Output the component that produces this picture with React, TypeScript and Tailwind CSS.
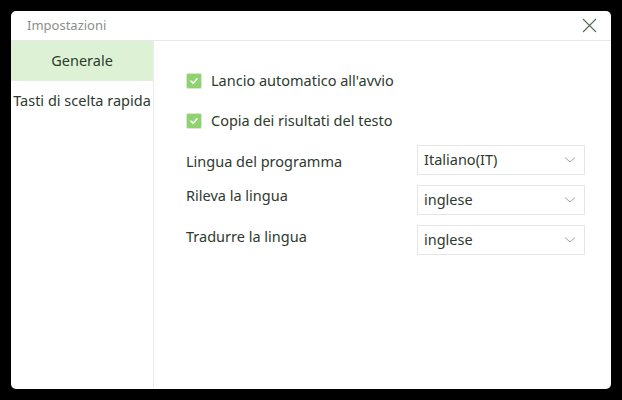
import React from 'react';

const font = { fontFamily: '"Noto Sans", "Open Sans", sans-serif' };

function Checkbox() {
  return (
    <div className="w-4 h-4 rounded-[2px] bg-[#8ed36f] border border-[#d9e9d0] flex items-center justify-center">
      <svg width="10" height="10" viewBox="0 0 10 10" fill="none">
        <path d="M2 5.2 L4.2 7.2 L8 2.8" stroke="white" strokeWidth="1.6" strokeLinecap="round" strokeLinejoin="round" />
      </svg>
    </div>
  );
}

function Select({ value }: { value: string }) {
  return (
    <div className="w-[168px] h-[30px] border border-[#e6e6e6] flex items-center justify-between pl-[6px] pr-[8px]">
      <span className="text-[14.5px] text-[#2e3a2e]">{value}</span>
      <svg width="12" height="8" viewBox="0 0 12 8" fill="none">
        <path d="M1 1.5 L6 6 L11 1.5" stroke="#9aa59a" strokeWidth="1" />
      </svg>
    </div>
  );
}

export default function App() {
  const checks = ["Lancio automatico all'avvio", 'Copia dei risultati del testo'];
  const rows = [
    { label: 'Lingua del programma', value: 'Italiano(IT)', shift: 'mt-[4px]' },
    { label: 'Rileva la lingua', value: 'inglese', shift: '-mt-[8px]' },
    { label: 'Tradurre la lingua', value: 'inglese', shift: '-mt-[6px]' },
  ];

  return (
    <div className="w-[622px] h-[400px] bg-black p-[11px]" style={font}>
      <div className="w-[600px] h-[378px] bg-white rounded-[5px] flex flex-col overflow-hidden">
        <div className="h-[30px] border-b border-[#e8e8e8] flex items-center justify-between pl-[16px] pr-[14px] shrink-0">
          <span className="text-[13px] text-[#8a8f8a]">Impostazioni</span>
          <svg width="15" height="15" viewBox="0 0 15 15" fill="none">
            <path d="M1 1 L14 14 M14 1 L1 14" stroke="#5a6a5a" strokeWidth="1.1" />
          </svg>
        </div>
        <div className="flex flex-1">
          <div className="w-[143px] border-r border-[#ececec] flex flex-col">
            <div className="h-[40px] bg-[#ddf2d5] flex items-center justify-center text-[14.5px] text-[#2e3a2e]">
              Generale
            </div>
            <div className="h-[40px] flex items-center justify-center text-[14.5px] text-[#2e3a2e] whitespace-nowrap">
              Tasti di scelta rapida
            </div>
          </div>
          <div className="flex-1 pl-[32px] pt-[20px]">
            {checks.map((c) => (
              <div key={c} className="h-[40px] flex items-center gap-[9px]">
                <Checkbox />
                <span className="text-[14.5px] text-[#2e3a2e]">{c}</span>
              </div>
            ))}
            <div className="mt-[4px] flex flex-col gap-[10px]">
              {rows.map((r) => (
                <div key={r.label} className="flex items-center">
                  <span className={`w-[231px] text-[14.5px] text-[#2e3a2e] ${r.shift}`}>{r.label}</span>
                  <Select value={r.value} />
                </div>
              ))}
            </div>
          </div>
        </div>
      </div>
    </div>
  );
}
